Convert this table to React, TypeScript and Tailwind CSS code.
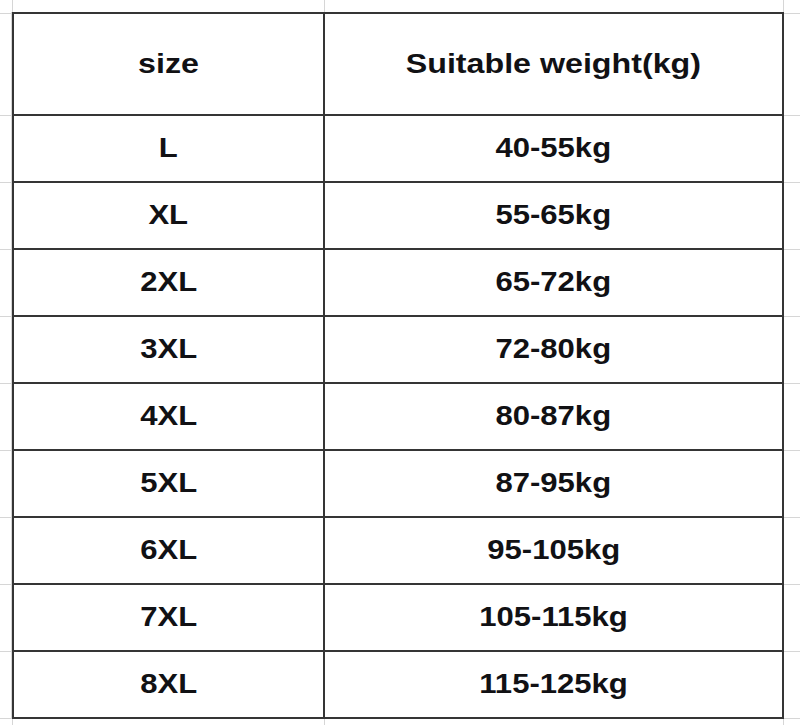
const rows: [string, string][] = [
  ['L', '40-55kg'],
  ['XL', '55-65kg'],
  ['2XL', '65-72kg'],
  ['3XL', '72-80kg'],
  ['4XL', '80-87kg'],
  ['5XL', '87-95kg'],
  ['6XL', '95-105kg'],
  ['7XL', '105-115kg'],
  ['8XL', '115-125kg'],
]

// faint spreadsheet gridlines that show outside the table
function SideStrip({ className }: { className: string }) {
  return (
    <div className={`flex flex-col ${className}`}>
      <div className="h-[1px]" />
      <div className="h-px bg-[#d6d6d6]" />
      <div className="h-[101px]" />
      <div className="h-px bg-[#d6d6d6]" />
      {rows.map(([size]) => (
        <div key={size} className="flex flex-col">
          <div className="h-[66px]" />
          <div className="h-px bg-[#d6d6d6]" />
        </div>
      ))}
    </div>
  )
}

function EdgeStrip({ className }: { className: string }) {
  return (
    <div className={`flex ${className}`}>
      <div className="w-[13px] border-r border-[#d6d6d6]" />
      <div className="w-[312px] border-r border-[#d6d6d6]" />
      <div className="w-[459px] border-r border-[#d6d6d6]" />
    </div>
  )
}

function Cell({ text, header }: { text: string; header?: boolean }) {
  return (
    <div
      className={`bg-white flex items-center justify-center ${
        header ? 'h-[100px] text-[28px]' : 'h-[65px] text-[27px]'
      }`}
    >
      <span className="font-bold text-[#111114] scale-x-[1.15] leading-none">
        {text}
      </span>
    </div>
  )
}

export default function App() {
  return (
    <div className="w-[800px] h-[725px] bg-white flex flex-col overflow-hidden font-['Liberation_Sans',Arial,sans-serif]">
      <EdgeStrip className="h-[12px] shrink-0" />
      <div className="flex shrink-0">
        <SideStrip className="w-[12px] border-r border-[#d6d6d6]" />
        <div className="grid grid-cols-[309px_457px] gap-[2px] p-[2px] bg-[#353535]">
          <Cell text="size" header />
          <Cell text="Suitable weight(kg)" header />
          {rows.map(([size, weight]) => (
            <div key={size} className="contents">
              <Cell text={size} />
              <Cell text={weight} />
            </div>
          ))}
        </div>
        <SideStrip className="flex-1" />
      </div>
      <EdgeStrip className="flex-1" />
    </div>
  )
}
